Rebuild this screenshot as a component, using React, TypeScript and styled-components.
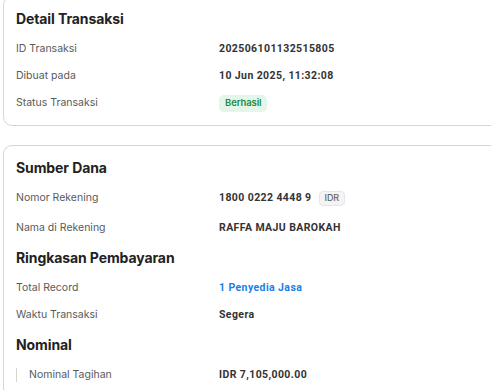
import styled, { createGlobalStyle } from "styled-components";

const GlobalStyle = createGlobalStyle`
    body {
        margin: 0;
        background: #ffffff;
        font-family: Inter, "Noto Sans", Arial, sans-serif;
        overflow: hidden;
    }
`;

type Item = {
    label: string;
    value: string;
    tone?: "link";
    badge?: "success" | "currency";
    badgeText?: string;
    indent?: boolean;
};

const detail: Item[] = [
    { label: "ID Transaksi", value: "202506101132515805" },
    { label: "Dibuat pada", value: "10 Jun 2025, 11:32:08" },
    { label: "Status Transaksi", value: "", badge: "success", badgeText: "Berhasil" },
];

const sumber: Item[] = [
    { label: "Nomor Rekening", value: "1800 0222 4448 9", badge: "currency", badgeText: "IDR" },
    { label: "Nama di Rekening", value: "RAFFA MAJU BAROKAH" },
];

const ringkasan: Item[] = [
    { label: "Total Record", value: "1 Penyedia Jasa", tone: "link" },
    { label: "Waktu Transaksi", value: "Segera" },
];

const nominal: Item[] = [
    { label: "Nominal Tagihan", value: "IDR 7,105,000.00", indent: true },
];

function Rows({ items }: { items: Item[] }) {
    return (
        <RowList>
            {items.map((it) => (
                <Row key={it.label} $spaced={it.badge === "currency"}>
                    <Label $indent={it.indent}>{it.label}</Label>
                    <Value $tone={it.tone}>
                        {it.value && <span>{it.value}</span>}
                        {it.badge && <Badge $kind={it.badge}>{it.badgeText}</Badge>}
                    </Value>
                </Row>
            ))}
        </RowList>
    );
}

export default function App() {
    return (
        <Page>
            <GlobalStyle />
            <Card $first>
                <Section>
                    <Title>Detail Transaksi</Title>
                    <Rows items={detail} />
                </Section>
            </Card>
            <Card>
                <Section>
                    <Title>Sumber Dana</Title>
                    <Rows items={sumber} />
                </Section>
                <Section>
                    <Title>Ringkasan Pembayaran</Title>
                    <Rows items={ringkasan} />
                </Section>
                <Section>
                    <Title>Nominal</Title>
                    <Rows items={nominal} />
                </Section>
            </Card>
        </Page>
    );
}

const Page = styled.div`
    width: 491px;
    height: 390px;
    overflow: hidden;
    padding-left: 3px;
    box-sizing: border-box;
    display: flex;
    flex-direction: column;
    gap: 19px;
`;

const Card = styled.div<{ $first?: boolean }>`
    width: 560px;
    flex-shrink: 0;
    box-sizing: border-box;
    margin-top: ${({ $first }) => ($first ? "-4px" : "0")};
    border: 1px solid #d6d6d6;
    border-radius: 9px;
    padding: 12px;
    display: flex;
    flex-direction: column;
    gap: 10px;
`;

const Section = styled.div`
    display: flex;
    flex-direction: column;
    gap: 10px;
`;

const Title = styled.h2`
    margin: 0;
    font-size: 14px;
    line-height: 20px;
    font-weight: 700;
    letter-spacing: -0.1px;
    color: #222222;
`;

const RowList = styled.div`
    display: flex;
    flex-direction: column;
    gap: 7px;
`;

const Row = styled.div<{ $spaced?: boolean }>`
    display: grid;
    grid-template-columns: 203px 1fr;
    align-items: center;
    height: 20px;
    margin-bottom: ${({ $spaced }) => ($spaced ? "3px" : "0")};
`;

const Label = styled.div<{ $indent?: boolean }>`
    font-size: 10.5px;
    line-height: 14px;
    color: #5a5a5a;
    ${({ $indent }) =>
        $indent &&
        `
        border-left: 1px solid #d4d4d4;
        padding-left: 12px;
    `}
`;

const Value = styled.div<{ $tone?: "link" }>`
    display: flex;
    align-items: center;
    gap: 7px;
    font-family: Roboto, Inter, Arial, sans-serif;
    font-size: 10.5px;
    line-height: 14px;
    font-weight: 700;
    letter-spacing: 0.4px;
    color: ${({ $tone }) => ($tone === "link" ? "#1a7fe6" : "#333333")};
`;

const Badge = styled.span<{ $kind: "success" | "currency" }>`
    display: inline-flex;
    align-items: center;
    box-sizing: border-box;
    font-family: Inter, Arial, sans-serif;
    letter-spacing: -0.1px;
    ${({ $kind }) =>
        $kind === "success"
            ? `
        height: 17px;
        padding: 0 6px;
        border-radius: 5px;
        background: #e4f6ea;
        color: #1e8a46;
        font-size: 9.5px;
        font-weight: 600;
    `
            : `
        height: 15px;
        padding: 0 5px;
        border-radius: 4px;
        background: #f4f4f4;
        border: 1px solid #e6e6e6;
        color: #666666;
        font-size: 9px;
        font-weight: 500;
    `}
`;
